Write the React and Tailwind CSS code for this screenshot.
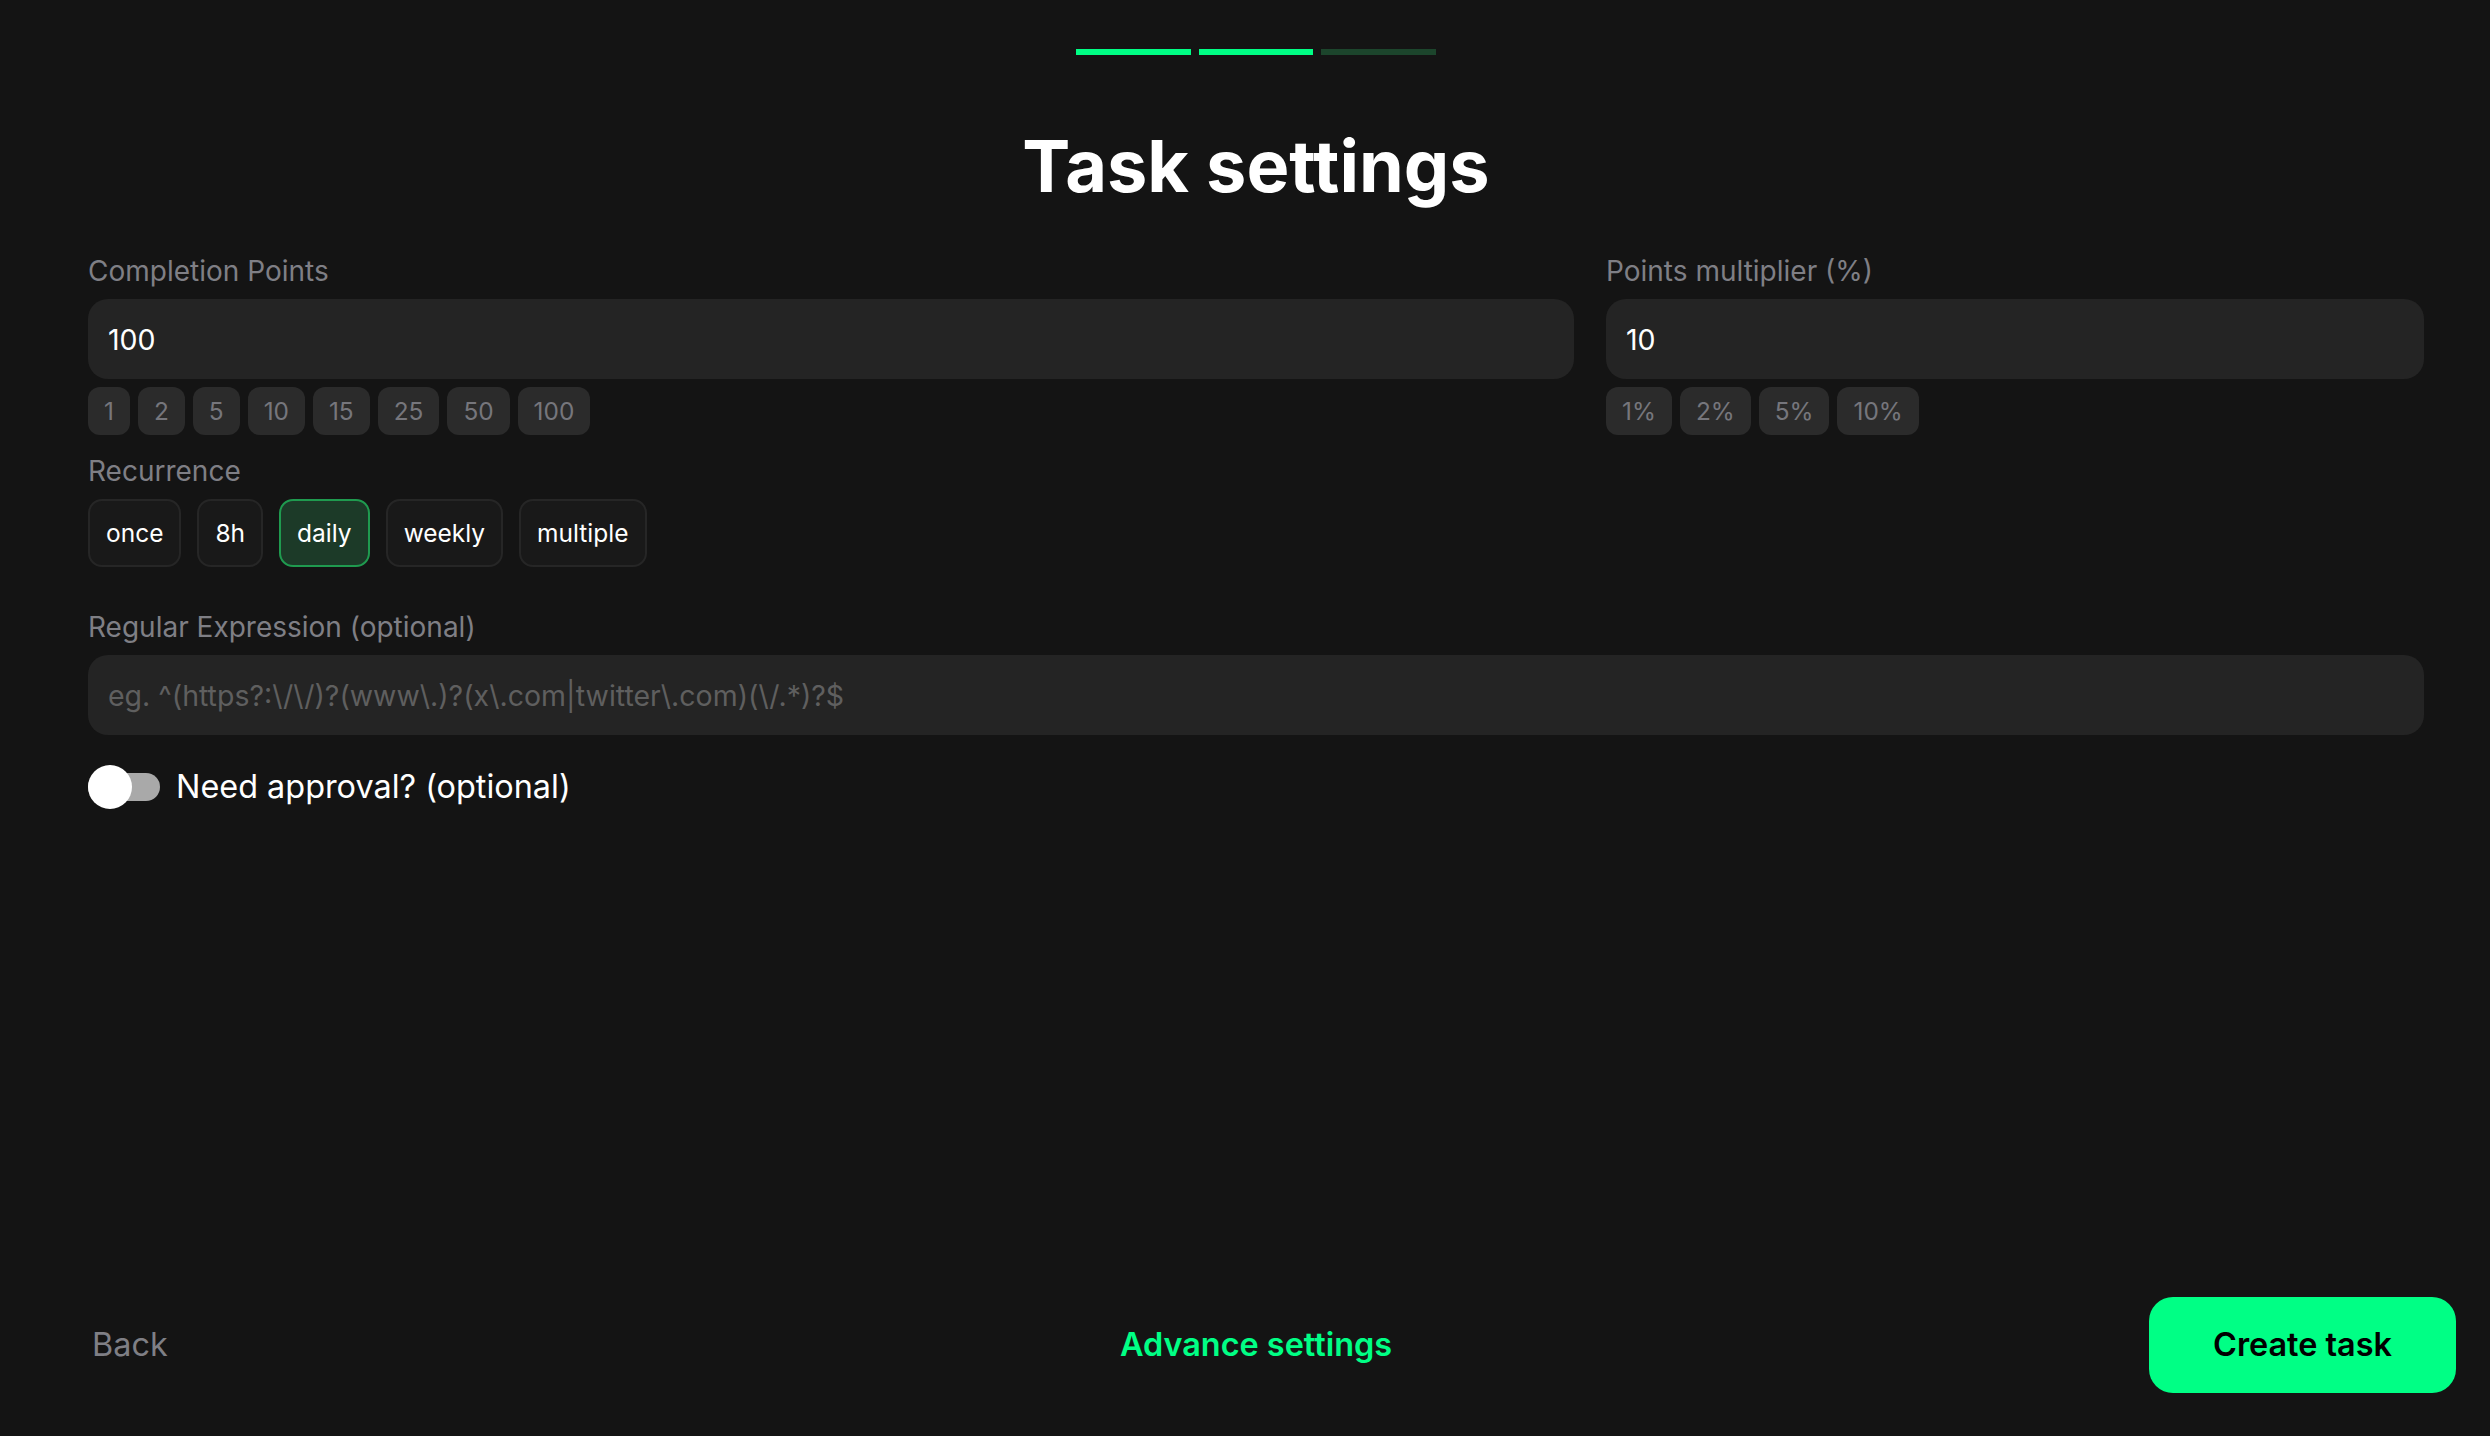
import React from "react";

const pointChips = ["1", "2", "5", "10", "15", "25", "50", "100"];
const multiplierChips = ["1%", "2%", "5%", "10%"];
const recurrence = ["once", "8h", "daily", "weekly", "multiple"];

const Label = ({ children }) => (
  <label className="block text-[28px] leading-[40px] text-[#7f7f85]">{children}</label>
);

const TextInput = ({ value, placeholder }) => (
  <input
    readOnly
    value={value}
    placeholder={placeholder}
    className="block h-[80px] w-full rounded-[20px] bg-[#242424] px-[20px] text-[28.5px] text-white outline-none placeholder:text-[#5f5f5f]"
  />
);

const Chips = ({ items }) => (
  <div className="mt-2 flex gap-2">
    {items.map((item) => (
      <button
        key={item}
        className="h-[48px] rounded-[12px] bg-[#2b2b2b] px-[16px] text-[24.4px] text-[#76767c]"
      >
        {item}
      </button>
    ))}
  </div>
);

export default function App() {
  return (
    <div className="flex h-screen flex-col bg-[#141414] pl-[56px] pr-[34px] font-['Inter',sans-serif]">
      <div className="flex justify-center gap-2 pt-[49px]">
        <div className="h-[6px] w-[115px] bg-[#00ff85]" />
        <div className="h-[6px] w-[114px] bg-[#00ff85]" />
        <div className="h-[6px] w-[115px] bg-[#1c452c]" />
      </div>

      <h1 className="mt-[67px] text-center text-[72px] font-bold leading-[88px] text-white">
        Task settings
      </h1>

      <div className="mt-[41px] flex-1 px-8">
        <div className="flex gap-8">
          <div className="flex-1">
            <Label>Completion Points</Label>
            <div className="mt-2">
              <TextInput value="100" />
            </div>
            <Chips items={pointChips} />
          </div>
          <div className="w-[818px]">
            <Label>Points multiplier (%)</Label>
            <div className="mt-2">
              <TextInput value="10" />
            </div>
            <Chips items={multiplierChips} />
          </div>
        </div>

        <div className="mt-[16px]">
          <Label>Recurrence</Label>
          <div className="mt-2 flex gap-4">
            {recurrence.map((item) => (
              <button
                key={item}
                className={
                  item === "daily"
                    ? "h-[68px] rounded-[14px] border-2 border-[#1f9a4f] bg-[#1c3a28] px-[16px] text-[24.5px] text-white"
                    : "h-[68px] rounded-[14px] border-2 border-[#262626] bg-[#191919] px-[16px] text-[24.5px] text-white"
                }
              >
                {item}
              </button>
            ))}
          </div>
        </div>

        <div className="mt-[40px]">
          <Label>Regular Expression (optional)</Label>
          <div className="mt-2">
            <TextInput placeholder="eg. ^(https?:\/\/)?(www\.)?(x\.com|twitter\.com)(\/.*)?$" />
          </div>
        </div>

        <div className="mt-[30px] flex items-center gap-4">
          <div className="relative h-[28px] w-[72px] rounded-full bg-[#a9a9a9]">
            <div className="absolute left-0 top-[-8px] h-[44px] w-[44px] rounded-full bg-white" />
          </div>
          <span className="text-[32.4px] leading-[44px] text-white">Need approval? (optional)</span>
        </div>
      </div>

      <div className="grid grid-cols-3 items-center pb-[43px]">
        <button className="justify-self-start pl-[36px] text-[32.4px] text-[#7f7f85]">Back</button>
        <button className="justify-self-center text-[32.4px] font-semibold text-[#00ff85]">
          Advance settings
        </button>
        <button className="h-[96px] w-[307px] justify-self-end rounded-[24px] bg-[#00ff85] text-[32.4px] font-semibold text-black">
          Create task
        </button>
      </div>
    </div>
  );
}
